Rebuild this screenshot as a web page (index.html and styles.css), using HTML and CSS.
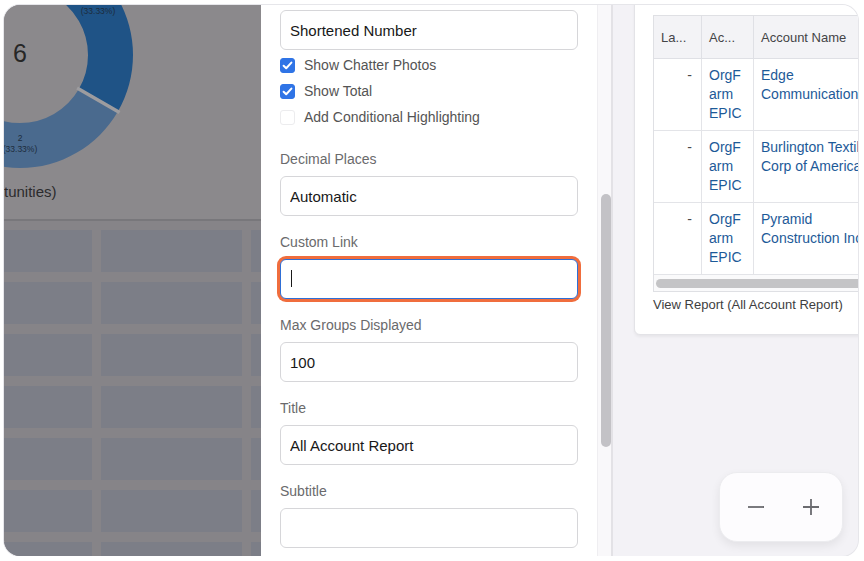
FILE: index.html
```html
<!DOCTYPE html>
<html lang="en">
<head>
    <meta charset="UTF-8">
    <meta name="viewport" content="width=device-width, initial-scale=1.0">
    <title>Edit Component - All Account Report</title>
    <link rel="stylesheet" href="styles.css">
</head>
<body>
    <div class="frame">
        <!-- dashboard behind the modal, dimmed -->
        <aside class="dash">
            <div class="chart">
                <svg class="donut" width="257" height="172" viewBox="0 0 257 172">
                    <path class="seg-dark" d="M16 -63 A113 113 0 0 1 113.86 106.5 L74.89 84 A68 68 0 0 0 16 -18 Z"/>
                    <path class="seg-light" d="M113.86 106.5 A113 113 0 0 1 -81.86 106.5 L-42.89 84 A68 68 0 0 0 74.89 84 Z"/>
                    <path class="seg-mid" d="M-81.86 106.5 A113 113 0 0 1 16 -63 L16 -18 A68 68 0 0 0 -42.89 84 Z"/>
                    <path class="seg-gap" d="M73.1 83 L115.6 107.5 M-41.1 83 L-83.6 107.5 M16 -16 V-65"/>
                    <text class="total" x="16" y="57">6</text>
                    <text class="seg-label" x="94" y="-2">2</text>
                    <text class="seg-label" x="94" y="9">(33.33%)</text>
                    <text class="seg-label" x="16" y="136">2</text>
                    <text class="seg-label" x="16" y="147">(33.33%)</text>
                </svg>
                <div class="chart-caption">tunities)</div>
            </div>
            <div class="tiles">
                <div class="tile"></div><div class="tile"></div><div class="tile"></div>
                <div class="tile"></div><div class="tile"></div><div class="tile"></div>
                <div class="tile"></div><div class="tile"></div><div class="tile"></div>
                <div class="tile"></div><div class="tile"></div><div class="tile"></div>
                <div class="tile"></div><div class="tile"></div><div class="tile"></div>
                <div class="tile"></div><div class="tile"></div><div class="tile"></div>
                <div class="tile"></div><div class="tile"></div><div class="tile"></div>
            </div>
        </aside>

        <!-- component properties panel -->
        <section class="props">
            <form class="props-form">
                <input class="field" type="text" value="Shortened Number">

                <div class="checks">
                    <label class="check-row"><span class="check on"><svg width="15" height="15" viewBox="0 0 15 15"><path d="M3.6 7.7 L6.2 10.2 L11.4 4.6"/></svg></span>Show Chatter Photos</label>
                    <label class="check-row"><span class="check on"><svg width="15" height="15" viewBox="0 0 15 15"><path d="M3.6 7.7 L6.2 10.2 L11.4 4.6"/></svg></span>Show Total</label>
                    <label class="check-row"><span class="check"></span>Add Conditional Highlighting</label>
                </div>

                <div class="form-group">
                    <label class="form-label" for="decimals">Decimal Places</label>
                    <input class="field" id="decimals" type="text" value="Automatic">
                </div>

                <div class="form-group">
                    <label class="form-label" for="customLink">Custom Link</label>
                    <div class="focus-wrap">
                        <input class="field field-focus" id="customLink" type="text" value="">
                        <span class="caret"></span>
                    </div>
                </div>

                <div class="form-group">
                    <label class="form-label" for="maxGroups">Max Groups Displayed</label>
                    <input class="field" id="maxGroups" type="text" value="100">
                </div>

                <div class="form-group">
                    <label class="form-label" for="title">Title</label>
                    <input class="field" id="title" type="text" value="All Account Report">
                </div>

                <div class="form-group">
                    <label class="form-label" for="subtitle">Subtitle</label>
                    <input class="field" id="subtitle" type="text" value="">
                </div>
            </form>
        </section>
        <div class="props-scroll"><div class="props-thumb"></div></div>

        <!-- live preview -->
        <main class="preview">
            <div class="card">
                <div class="table-wrap">
                    <table class="report">
                        <thead>
                            <tr>
                                <th class="col-a">La...</th>
                                <th class="col-b">Ac...</th>
                                <th class="col-c">Account Name</th>
                            </tr>
                        </thead>
                        <tbody>
                            <tr>
                                <td class="dash-cell">-</td>
                                <td class="link">OrgF<br>arm<br>EPIC</td>
                                <td class="link">Edge<br>Communications</td>
                            </tr>
                            <tr>
                                <td class="dash-cell">-</td>
                                <td class="link">OrgF<br>arm<br>EPIC</td>
                                <td class="link">Burlington Textiles<br>Corp of America</td>
                            </tr>
                            <tr>
                                <td class="dash-cell">-</td>
                                <td class="link">OrgF<br>arm<br>EPIC</td>
                                <td class="link">Pyramid<br>Construction Inc.</td>
                            </tr>
                        </tbody>
                    </table>
                    <div class="hscroll"><div class="hthumb"></div></div>
                </div>
                <a class="view-report" href="#">View Report (All Account Report)</a>
            </div>

            <div class="zoom-ctl">
                <button class="zoom-btn" type="button" aria-label="Zoom out">
                    <svg width="18" height="18" viewBox="0 0 18 18"><path d="M1 9 H17"/></svg>
                </button>
                <button class="zoom-btn" type="button" aria-label="Zoom in">
                    <svg width="18" height="18" viewBox="0 0 18 18"><path d="M1 9 H17 M9 1 V17"/></svg>
                </button>
            </div>
        </main>
    </div>
</body>
</html>
```

FILE: styles.css
```css
body {
    margin: 0;
    background-color: #ffffff;
    font-family: "Liberation Sans", Arial, Helvetica, sans-serif;
}
.frame {
    margin: 5px 0 0 4px;
    width: 854px;
    height: 551px;
    border-radius: 16px;
    overflow: hidden;
    display: flex;
    box-shadow: 0 0 0 1px #e6e6ea;
    background-color: #f3f2f6;
}

/* dimmed dashboard */
.dash {
    width: 257px;
    flex-shrink: 0;
    overflow: hidden;
    background-color: #868488;
}
.chart {
    height: 214px;
    background-color: #8b898c;
    border-bottom: 2px solid #78777b;
    box-sizing: content-box;
}
.donut {
    display: block;
}
.seg-dark { fill: #1f5386; }
.seg-light { fill: #4a6a8e; }
.seg-mid { fill: #3b6f9e; }
.seg-gap {
    stroke: #9d9c9f;
    stroke-width: 3.5;
    fill: none;
}
.total {
    font-size: 25px;
    fill: #262626;
    text-anchor: middle;
    font-family: "Liberation Sans", Arial, sans-serif;
}
.seg-label {
    font-size: 8.5px;
    fill: #1d2c3c;
    text-anchor: middle;
    font-family: "Liberation Sans", Arial, sans-serif;
}
.chart-caption {
    margin-top: 6px;
    font-size: 15px;
    line-height: 18px;
    color: #2b2b2c;
    white-space: nowrap;
}
.tiles {
    display: grid;
    grid-template-columns: 88px 141px 141px;
    grid-auto-rows: 42px;
    column-gap: 9px;
    row-gap: 10px;
    padding-top: 9px;
}
.tile {
    background-color: #7c7e87;
}

/* properties panel */
.props {
    width: 336px;
    flex-shrink: 0;
    background-color: #ffffff;
    box-sizing: border-box;
    padding: 5px 19px 0;
    overflow: hidden;
}
.field {
    display: block;
    width: 100%;
    height: 40px;
    box-sizing: border-box;
    border: 1px solid #d6d6d9;
    border-radius: 6px;
    padding: 0 9px;
    font-family: "Liberation Sans", Arial, sans-serif;
    font-size: 15px;
    color: #181818;
    background-color: #ffffff;
    outline: none;
}
.field-focus {
    border-color: #2f6fd6;
    box-shadow: 0 0 0 3px #f06d3d;
}
.focus-wrap {
    position: relative;
}
.caret {
    position: absolute;
    left: 11px;
    top: 11px;
    width: 1px;
    height: 17px;
    background-color: #1a1a1a;
}
.checks {
    margin: 2px 0 21px;
}
.check-row {
    display: flex;
    align-items: center;
    height: 26px;
    font-size: 14px;
    color: #545454;
}
.check {
    width: 15px;
    height: 15px;
    box-sizing: border-box;
    border: 1px solid #ececee;
    border-radius: 3px;
    margin-right: 9px;
    flex-shrink: 0;
    background-color: #ffffff;
}
.check svg {
    display: block;
}
.check.on {
    background-color: #2f74e6;
    border-color: #2f74e6;
}
.check.on svg {
    margin: -1px;
}
.check path {
    fill: none;
    stroke: #ffffff;
    stroke-width: 2;
    stroke-linecap: round;
    stroke-linejoin: round;
}
.form-group {
    margin-bottom: 18px;
}
.form-label {
    display: block;
    font-size: 14px;
    line-height: 17px;
    color: #6a6a6c;
    margin-bottom: 8px;
}

.props-scroll {
    width: 16px;
    flex-shrink: 0;
    box-sizing: border-box;
    background-color: #f9f8fa;
    border-left: 1px solid #efeef1;
    border-right: 2px solid #e3e2e6;
    padding: 189px 0 0 3px;
}
.props-thumb {
    width: 10px;
    height: 253px;
    border-radius: 5px;
    background-color: #c3c2c6;
}

/* preview */
.preview {
    flex: 1;
    position: relative;
    overflow: hidden;
    padding-left: 21px;
}
.card {
    width: 340px;
    margin-top: -10px;
    box-sizing: border-box;
    padding: 19px 18px 21px;
    background-color: #ffffff;
    border: 1px solid #e3e3e7;
    border-radius: 6px;
    box-shadow: 0 2px 3px rgba(0, 0, 0, 0.05);
}
.table-wrap {
    border: 1px solid #dfe0e4;
    overflow: hidden;
}
.report {
    border-collapse: collapse;
    table-layout: fixed;
    width: 320px;
}
.report th {
    height: 42px;
    background-color: #f3f3f6;
    border-right: 1px solid #dfe0e5;
    border-bottom: 1px solid #dfe0e5;
    padding: 0 7px;
    text-align: left;
    font-weight: normal;
    font-size: 13px;
    color: #444447;
    white-space: nowrap;
    overflow: hidden;
}
.col-a { width: 33px; }
.col-b { width: 37px; }
.report td {
    vertical-align: top;
    border-right: 1px solid #e3e4e8;
    border-bottom: 1px solid #e3e4e8;
    padding: 7px;
    font-size: 14px;
    line-height: 19px;
    white-space: nowrap;
    overflow: hidden;
}
.report td.dash-cell {
    text-align: right;
    padding-right: 9px;
    color: #4a4a4a;
}
.report td.link {
    color: #1d5a98;
}
.hscroll {
    height: 16px;
    background-color: #fafafb;
    padding: 4px 0 0 2px;
    box-sizing: border-box;
}
.hthumb {
    width: 300px;
    height: 9px;
    border-radius: 5px;
    background-color: #c4c4c6;
}
.view-report {
    display: block;
    margin-top: 5px;
    font-size: 13px;
    line-height: 16px;
    color: #3e3e40;
    text-decoration: none;
    white-space: nowrap;
}

.zoom-ctl {
    position: absolute;
    right: 15px;
    bottom: 14px;
    width: 124px;
    height: 70px;
    box-sizing: border-box;
    border: 1px solid #ececef;
    border-radius: 18px;
    background-color: #fdfcfe;
    box-shadow: 0 4px 10px rgba(0, 0, 0, 0.07);
    display: flex;
    align-items: center;
    padding-left: 26px;
    gap: 35px;
}
.zoom-btn {
    width: 20px;
    height: 20px;
    padding: 0;
    border: none;
    background: none;
    display: flex;
    align-items: center;
    justify-content: center;
    cursor: pointer;
}
.zoom-btn path {
    stroke: #6b6b70;
    stroke-width: 1.8;
    fill: none;
}
```
